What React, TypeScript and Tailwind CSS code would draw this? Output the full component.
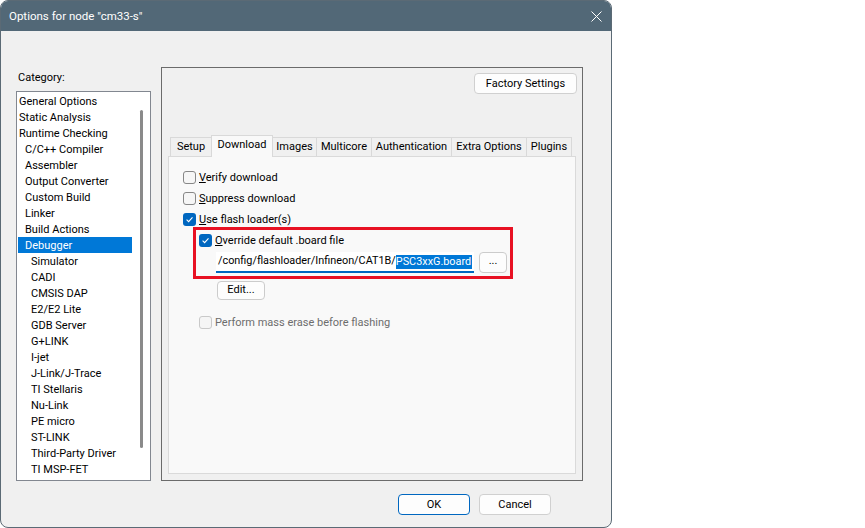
import React from 'react'

const CATEGORIES: [string, number][] = [
  ['General Options', 0],
  ['Static Analysis', 0],
  ['Runtime Checking', 0],
  ['C/C++ Compiler', 1],
  ['Assembler', 1],
  ['Output Converter', 1],
  ['Custom Build', 1],
  ['Linker', 1],
  ['Build Actions', 1],
  ['Debugger', 1],
  ['Simulator', 2],
  ['CADI', 2],
  ['CMSIS DAP', 2],
  ['E2/E2 Lite', 2],
  ['GDB Server', 2],
  ['G+LINK', 2],
  ['I-jet', 2],
  ['J-Link/J-Trace', 2],
  ['TI Stellaris', 2],
  ['Nu-Link', 2],
  ['PE micro', 2],
  ['ST-LINK', 2],
  ['Third-Party Driver', 2],
  ['TI MSP-FET', 2],
]

const INDENT = ['pl-[1px]', 'pl-[7px]', 'pl-[13px]']

const TABS: [string, string][] = [
  ['Setup', 'w-[41px]'],
  ['Download', 'w-[62px]'],
  ['Images', 'w-[44px]'],
  ['Multicore', 'w-[55px]'],
  ['Authentication', 'w-[80px]'],
  ['Extra Options', 'w-[75px]'],
  ['Plugins', 'w-[45px]'],
]

function Check({ checked, disabled }: { checked?: boolean; disabled?: boolean }) {
  if (checked) {
    return (
      <span className="w-[13px] h-[13px] rounded-[3px] bg-[#0067c0] flex items-center justify-center shrink-0">
        <svg width="9" height="9" viewBox="0 0 9 9">
          <path d="M1.6 4.7 L3.6 6.6 L7.5 2.3" fill="none" stroke="#ffffff" strokeWidth="1.1" />
        </svg>
      </span>
    )
  }
  return (
    <span
      className={`w-[13px] h-[13px] rounded-[3px] border shrink-0 ${
        disabled ? 'border-[#c9c9c9] bg-[#f5f5f5]' : 'border-[#878787] bg-[#f6f6f6]'
      }`}
    />
  )
}

function CheckRow({ checked, disabled, children }: { checked?: boolean; disabled?: boolean; children: React.ReactNode }) {
  return (
    <div className={`h-[21px] flex items-center gap-[3px] ${disabled ? 'text-[#6d6d6d]' : ''}`}>
      <Check checked={checked} disabled={disabled} />
      <span className="pt-[1px]">{children}</span>
    </div>
  )
}

function Button({ className, children }: { className?: string; children: React.ReactNode }) {
  return (
    <div
      className={`flex items-center justify-center rounded-[4px] border bg-[#fdfdfd] ${className ?? 'border-[#d0d0d0]'}`}
    >
      {children}
    </div>
  )
}

export default function App() {
  return (
    <div className="w-[865px] h-[528px] bg-white">
      <div className="w-[612px] h-[528px] border border-[#5b6a75] rounded-[8px] overflow-hidden flex flex-col bg-[#f0f0f0] text-[11px] text-black font-['Roboto',sans-serif]">
        {/* title bar */}
        <div className="h-[30px] shrink-0 bg-[#526877] flex items-center justify-between pl-[8px] pr-[9px] text-white">
          <span className="text-[11.5px] pt-[1px]">Options for node "cm33-s"</span>
          <svg width="11" height="11" viewBox="0 0 11 11">
            <path d="M0.5 0.5 L10.5 10.5 M10.5 0.5 L0.5 10.5" stroke="#ffffff" strokeWidth="1" />
          </svg>
        </div>

        <div className="flex-1 flex flex-col">
          <div className="flex pl-[15px] pt-[36px]">
            {/* category column */}
            <div className="w-[135px] flex flex-col pt-[3px]">
              <div className="h-[16px] leading-[16px] pl-[2px]">Category:</div>
              <div className="relative mt-[5px] h-[390px] border border-[#828790] bg-white pt-[1px]">
                {CATEGORIES.map(([name, level]) => (
                  <div
                    key={name}
                    className={`ml-[1px] w-[114px] h-[16px] leading-[16px] pt-[1px] ${INDENT[level]} ${
                      name === 'Debugger' ? 'bg-[#0078d7] text-white' : ''
                    }`}
                  >
                    {name}
                  </div>
                ))}
                <div className="absolute left-[123px] top-[18px] w-[3px] h-[338px] rounded-full bg-[#8a8a8a]" />
              </div>
            </div>

            {/* options group */}
            <div className="ml-[10px] w-[422px] h-[414px] border border-[#6b6b6b] flex flex-col px-[6px]">
              <div className="flex justify-end pt-[5px] -mr-[1px]">
                <Button className="border-[#d0d0d0] w-[103px] h-[21px] pt-[1px]">Factory Settings</Button>
              </div>

              <div className="mt-[41px] h-[21px] flex items-end pl-[2px]">
                {TABS.map(([name, w], i) =>
                  name === 'Download' ? (
                    <div
                      key={name}
                      className={`${w} h-[22px] -mb-[1px] relative z-10 bg-[#f9f9f9] border-t border-l border-r border-[#d9d9d9] flex items-center justify-center pb-[3px]`}
                    >
                      {name}
                    </div>
                  ) : (
                    <div
                      key={name}
                      className={`${w} h-[19px] bg-[#f0f0f0] border-t border-[#d9d9d9] flex items-center justify-center pt-[1px] ${
                        i === TABS.length - 1 ? 'border-r' : ''
                      } ${i === 0 ? 'border-l' : ''} ${i > 1 ? 'border-r' : ''}`}
                    >
                      {name}
                    </div>
                  )
                )}
              </div>

              <div className="h-[318px] border border-[#dadada] bg-[#f9f9f9] flex flex-col items-start pl-[14px] pt-[10px]">
                <CheckRow>
                  <span className="underline">V</span>erify download
                </CheckRow>
                <CheckRow>
                  <span className="underline">S</span>uppress download
                </CheckRow>
                <CheckRow checked>
                  <span className="underline">U</span>se flash loader(s)
                </CheckRow>

                <div className="ml-[10px] -mt-[3px] w-[320px] border-[3px] border-[#e81123] pl-[3px] pb-[3px] flex flex-col">
                  <div className="h-[21px] flex items-center gap-[3px]">
                    <Check checked />
                    <span className="pt-[1px]">
                      <span className="underline">O</span>verride default .board file
                    </span>
                  </div>
                  <div className="mt-[1px] ml-[17px] flex gap-[5px]">
                    <div className="w-[258px] h-[21px] bg-white border-b-2 border-[#0067c0] flex items-center pl-[2px] whitespace-nowrap overflow-hidden text-[10.85px]">
                      <span>/config/flashloader/Infineon/CAT1B/</span>
                      <span className="bg-[#0078d7] text-white leading-[14px] pr-[1px]">PSC3xxG.board</span>
                    </div>
                    <Button className="border-[#cccccc] w-[28px] h-[21px] pb-[3px]">...</Button>
                  </div>
                </div>

                <Button className="border-[#cccccc] ml-[34px] mt-[2px] w-[48px] h-[19px]">Edit...</Button>

                <div className="ml-[16px] mt-[12px]">
                  <CheckRow disabled>Perform mass erase before flashing</CheckRow>
                </div>
              </div>
            </div>
          </div>

          <div className="flex justify-end gap-[9px] pr-[60px] mt-[13px]">
            <Button className="border-[#0067c0] w-[72px] h-[21px] pt-[1px]">OK</Button>
            <Button className="border-[#d0d0d0] w-[72px] h-[21px] pt-[1px]">Cancel</Button>
          </div>
        </div>
      </div>
    </div>
  )
}
